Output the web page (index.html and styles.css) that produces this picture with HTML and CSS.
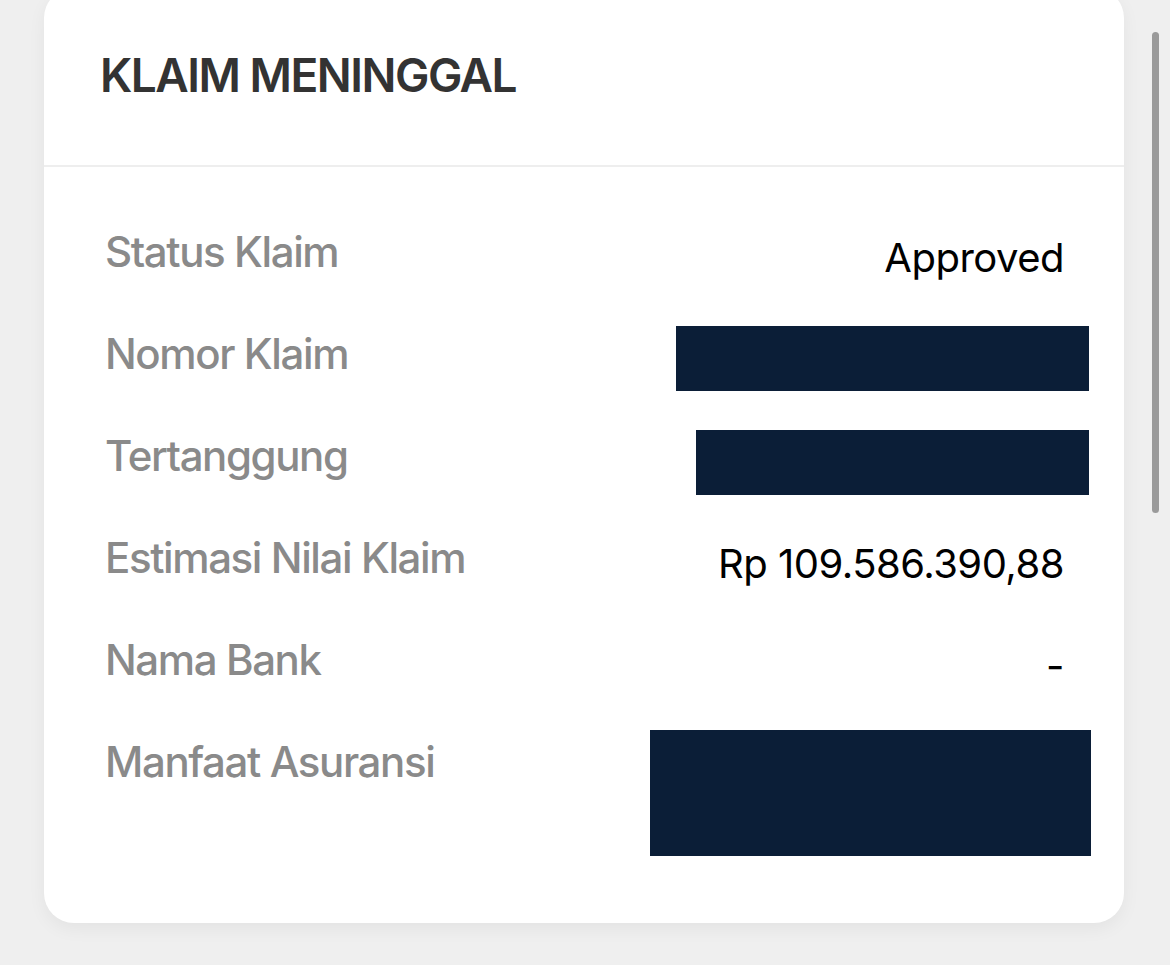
FILE: index.html
```html
<!DOCTYPE html>
<html lang="id">
<head>
<meta charset="utf-8">
<title>Klaim Meninggal</title>
<link rel="stylesheet" href="styles.css">
</head>
<body>
<div class="page">
  <section class="card">
    <header class="card-head">
      <h1 class="title">KLAIM MENINGGAL</h1>
    </header>
    <div class="card-body">
      <div class="row">
        <div class="label">Status Klaim</div>
        <div class="value">Approved</div>
      </div>
      <div class="row">
        <div class="label">Nomor Klaim</div>
        <div class="value"><div class="redact redact-1"></div></div>
      </div>
      <div class="row">
        <div class="label">Tertanggung</div>
        <div class="value"><div class="redact redact-2"></div></div>
      </div>
      <div class="row">
        <div class="label">Estimasi Nilai Klaim</div>
        <div class="value">Rp 109.586.390,88</div>
      </div>
      <div class="row">
        <div class="label">Nama Bank</div>
        <div class="value">-</div>
      </div>
      <div class="row row-last">
        <div class="label">Manfaat Asuransi</div>
        <div class="value"><div class="redact redact-3"></div></div>
      </div>
    </div>
  </section>
</div>
<div class="scrollbar"></div>
</body>
</html>
```
FILE: styles.css
```css
html, body {
  margin: 0;
  padding: 0;
}
body {
  background: #efefef;
  font-family: Inter, "Noto Sans", "Liberation Sans", sans-serif;
  width: 1170px;
  height: 965px;
  overflow: hidden;
  position: relative;
}
.page {
  padding-left: 44px;
}
.card {
  width: 1080px;
  margin-top: -12px;
  background: #ffffff;
  border-radius: 30px;
  box-shadow: 0 6px 18px rgba(0, 0, 0, 0.05);
}
.card-head {
  padding: 59px 56px 62px 56px;
  border-bottom: 2px solid #eeeeee;
}
.title {
  margin: 0;
  font-size: 46px;
  line-height: 56px;
  font-weight: 600;
  color: #333333;
  letter-spacing: -1.5px;
}
.card-body {
  padding: 60px 60px 67px 61px;
}
.row {
  display: flex;
  justify-content: space-between;
  align-items: flex-start;
  height: 102px;
}
.row-last {
  height: auto;
}
.label {
  font-size: 42px;
  line-height: 50px;
  font-weight: 500;
  color: #8a8a8a;
  letter-spacing: -1.4px;
}
.value {
  font-size: 40px;
  line-height: 50px;
  padding-top: 6px;
  color: #000000;
  text-align: right;
  letter-spacing: -0.5px;
}
.redact {
  background: #0b1e37;
}
.redact-1 {
  width: 413px;
  height: 65px;
  margin-top: -9px;
  margin-right: -25px;
}
.redact-2 {
  width: 393px;
  height: 65px;
  margin-top: -7px;
  margin-right: -25px;
}
.redact-3 {
  width: 441px;
  height: 126px;
  margin-top: -13px;
  margin-right: -27px;
}
.scrollbar {
  position: absolute;
  left: 1152px;
  top: 32px;
  width: 7px;
  height: 481px;
  border-radius: 4px;
  background: #9a9a9a;
}
```
